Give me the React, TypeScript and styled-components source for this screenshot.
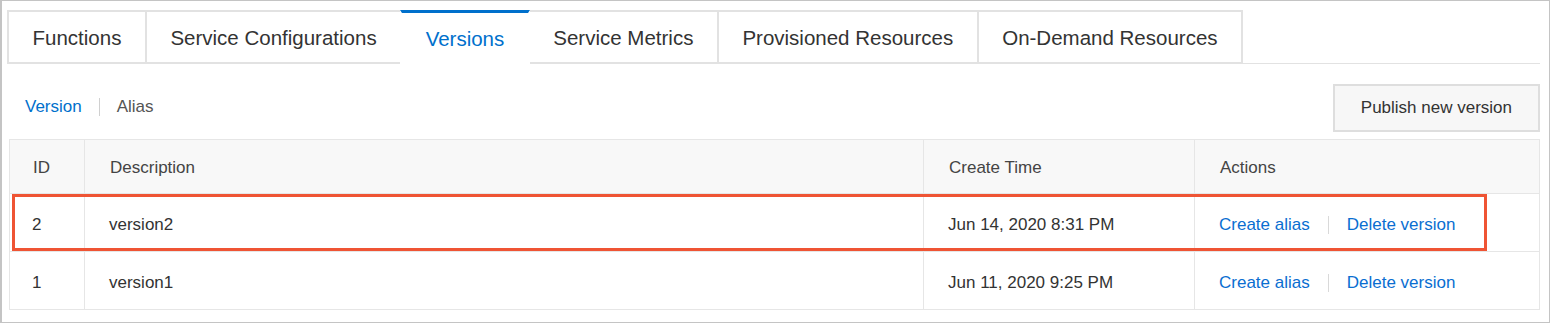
import React from "react";
import styled, { createGlobalStyle } from "styled-components";

const GlobalStyle = createGlobalStyle`
  html, body {
    margin: 0;
    padding: 0;
    background: #fff;
  }
  body {
    font-family: "Liberation Sans", Arial, sans-serif;
    color: #333;
  }
`;

interface Version {
  id: number;
  description: string;
  createdAt: string;
}

const tabs = [
  "Functions",
  "Service Configurations",
  "Versions",
  "Service Metrics",
  "Provisioned Resources",
  "On-Demand Resources",
];

const versions: Version[] = [
  { id: 2, description: "version2", createdAt: "Jun 14, 2020 8:31 PM" },
  { id: 1, description: "version1", createdAt: "Jun 11, 2020 9:25 PM" },
];

const App: React.FC = () => {
  return (
    <>
      <GlobalStyle />
      <Frame>
        <TabBar>
          {tabs.map((t) => (
            <Tab key={t} $active={t === "Versions"}>
              {t}
            </Tab>
          ))}
        </TabBar>

        <Toolbar>
          <SubNav>
            <SubLink $active>Version</SubLink>
            <SubDivider />
            <SubLink>Alias</SubLink>
          </SubNav>
          <Button>Publish new version</Button>
        </Toolbar>

        <TableWrap>
          <Table>
            <colgroup>
              <col style={{ width: 75 }} />
              <col />
              <col style={{ width: 271 }} />
              <col style={{ width: 345 }} />
            </colgroup>
            <thead>
              <tr>
                <Th $first>ID</Th>
                <Th>Description</Th>
                <Th>Create Time</Th>
                <Th>Actions</Th>
              </tr>
            </thead>
            <tbody>
              {versions.map((v) => (
                <tr key={v.id}>
                  <Td $first>{v.id}</Td>
                  <Td>{v.description}</Td>
                  <Td>{v.createdAt}</Td>
                  <Td>
                    <Actions>
                      <ActionLink>Create alias</ActionLink>
                      <ActionDivider />
                      <ActionLink>Delete version</ActionLink>
                    </Actions>
                  </Td>
                </tr>
              ))}
            </tbody>
          </Table>
          <Highlight />
        </TableWrap>
      </Frame>
    </>
  );
};

const Frame = styled.div`
  box-sizing: border-box;
  width: 1550px;
  height: 323px;
  border: 1px solid #c4c4c4;
  border-left-width: 2px;
  padding: 9px 9px 0 5px;
`;

const TabBar = styled.div`
  display: flex;
  height: 53px;
  border-bottom: 1px solid #e2e2e2;
`;

const Tab = styled.div<{ $active?: boolean }>`
  box-sizing: border-box;
  height: ${(p) => (p.$active ? "54px" : "53px")};
  display: flex;
  align-items: center;
  padding: 1px 23.5px 0;
  margin-left: -2px;
  font-size: 20.5px;
  white-space: nowrap;
  border: 2px solid #e2e2e2;
  border-bottom-width: 1px;
  background: #fff;
  color: ${(p) => (p.$active ? "#0070cc" : "#333")};
  ${(p) =>
    p.$active &&
    `
    border-top: 3px solid #0070cc;
    border-bottom-color: #fff;
    border-left-color: transparent;
    border-right-color: transparent;
    position: relative;
    z-index: 1;
  `}
  &:first-child {
    margin-left: 0;
  }
`;

const Toolbar = styled.div`
  display: flex;
  align-items: center;
  justify-content: space-between;
  height: 48px;
  margin-top: 20px;
  margin-bottom: 7px;
`;

const SubNav = styled.div`
  display: flex;
  align-items: center;
  gap: 17px;
  padding-left: 18px;
  margin-top: -3px;
`;

const SubLink = styled.span<{ $active?: boolean }>`
  font-size: 17px;
  color: ${(p) => (p.$active ? "#0070cc" : "#555")};
`;

const SubDivider = styled.span`
  width: 1px;
  height: 18px;
  background: #d0d0d0;
`;

const Button = styled.button`
  box-sizing: border-box;
  height: 48px;
  padding: 0 26px;
  font-family: inherit;
  font-size: 17px;
  color: #333;
  background: #f7f7f7;
  border: 2px solid #dedede;
  border-radius: 0;
`;

const TableWrap = styled.div`
  position: relative;
  margin-left: 2px;
`;

const Table = styled.table`
  width: 100%;
  border-collapse: collapse;
  table-layout: fixed;
  font-size: 17px;
  color: #333;
  border: 1px solid #e6e6e6;
`;

const Th = styled.th<{ $first?: boolean }>`
  height: 50px;
  padding: 3px 0 0 ${(p) => (p.$first ? "23px" : "25px")};
  text-align: left;
  font-weight: normal;
  background: #f8f8f8;
  border: 1px solid #e6e6e6;
  color: #444;
`;

const Td = styled.td<{ $first?: boolean }>`
  height: 53px;
  padding: 4px 0 0 ${(p) => (p.$first ? "22px" : "24px")};
  border: 1px solid #e6e6e6;
`;

const Actions = styled.div`
  display: flex;
  align-items: center;
  gap: 18px;
`;

const ActionLink = styled.span`
  color: #0a6ed1;
`;

const ActionDivider = styled.span`
  width: 1px;
  height: 18px;
  background: #d9d9d9;
`;

const Highlight = styled.div`
  position: absolute;
  left: 3px;
  top: 55px;
  width: 1475px;
  height: 57px;
  box-sizing: border-box;
  border: 3px solid #ef5434;
  pointer-events: none;
`;

export default App;
